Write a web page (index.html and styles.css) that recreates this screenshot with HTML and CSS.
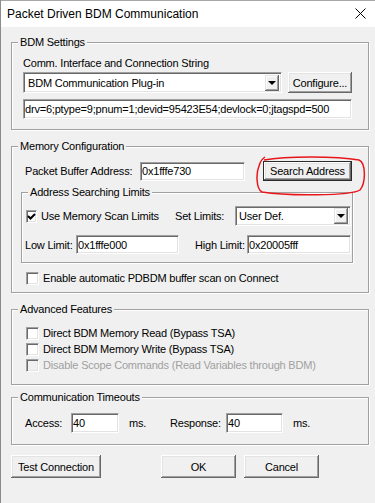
FILE: index.html
```html
<!DOCTYPE html>
<html lang="en">
<head>
    <meta charset="UTF-8">
    <title>Packet Driven BDM Communication</title>
    <link rel="stylesheet" href="styles.css">
</head>
<body>
    <div class="window">
        <div class="titlebar">
            <span class="title">Packet Driven BDM Communication</span>
            <svg class="close" width="11" height="11" viewBox="0 0 11 11">
                <path d="M0.5 0.5 L10.5 10.5 M10.5 0.5 L0.5 10.5" stroke="#000" stroke-width="1" fill="none"/>
            </svg>
        </div>

        <div class="client">
            <!-- BDM settings -->
            <fieldset class="group group-bdm">
                <legend>BDM Settings</legend>
                <div class="group-body">
                    <div class="caption">Comm. Interface and Connection String</div>
                    <div class="row row-combo">
                        <div class="combo combo-plugin">
                            <span class="combo-text">BDM Communication Plug-in</span>
                            <span class="drop"></span>
                        </div>
                        <button class="btn btn-configure">Configure...</button>
                    </div>
                    <input class="edit edit-conn" value="drv=6;ptype=9;pnum=1;devid=95423E54;devlock=0;jtagspd=500">
                </div>
            </fieldset>

            <!-- memory configuration -->
            <fieldset class="group group-mem">
                <legend>Memory Configuration</legend>
                <div class="group-body">
                    <div class="row row-buffer">
                        <span class="lbl lbl-buffer">Packet Buffer Address:</span>
                        <input class="edit edit-buffer" value="0x1fffe730">
                        <button class="btn btn-default btn-search">Search Address</button>
                    </div>

                    <fieldset class="group group-limits">
                        <legend>Address Searching Limits</legend>
                        <div class="group-body">
                            <div class="row row-scan">
                                <label class="check check-scan">
                                    <span class="box">
                                        <svg width="9" height="9" viewBox="0 0 9 9"><path d="M1 4 L3.5 6.5 L8 2" stroke="#000" stroke-width="2" fill="none"/></svg>
                                    </span>
                                    Use Memory Scan Limits
                                </label>
                                <span class="lbl lbl-set">Set Limits:</span>
                                <div class="combo combo-limits">
                                    <span class="combo-text">User Def.</span>
                                    <span class="drop"></span>
                                </div>
                            </div>
                            <div class="row row-limits">
                                <span class="lbl lbl-low">Low Limit:</span>
                                <input class="edit edit-low" value="0x1fffe000">
                                <span class="lbl lbl-high">High Limit:</span>
                                <input class="edit edit-high" value="0x20005fff">
                            </div>
                        </div>
                    </fieldset>

                    <label class="check check-auto">
                        <span class="box"></span>
                        Enable automatic PDBDM buffer scan on Connect
                    </label>
                </div>
                <svg class="mark" width="112" height="44" viewBox="0 0 112 44">
                    <path d="M8 5 C30 1, 80 1, 103 5 C110 8, 110 28, 104 35 C95 41, 30 41, 6 37 C0 34, 0 18, 3 11 C4 7, 6 4, 9 2" stroke="#e8161b" stroke-width="1.5" fill="none"/>
                </svg>
            </fieldset>

            <!-- advanced -->
            <fieldset class="group group-adv">
                <legend>Advanced Features</legend>
                <div class="group-body">
                    <label class="check"><span class="box"></span>Direct BDM Memory Read (Bypass TSA)</label>
                    <label class="check"><span class="box"></span>Direct BDM Memory Write (Bypass TSA)</label>
                    <label class="check disabled"><span class="box"></span>Disable Scope Commands (Read Variables through BDM)</label>
                </div>
            </fieldset>

            <!-- timeouts -->
            <fieldset class="group group-time">
                <legend>Communication Timeouts</legend>
                <div class="group-body">
                    <div class="row row-time">
                        <span class="lbl lbl-access">Access:</span>
                        <input class="edit edit-access" value="40">
                        <span class="lbl lbl-ms">ms.</span>
                        <span class="lbl lbl-resp">Response:</span>
                        <input class="edit edit-resp" value="40">
                        <span class="lbl lbl-ms">ms.</span>
                    </div>
                </div>
            </fieldset>

            <div class="buttons">
                <button class="btn btn-test">Test Connection</button>
                <button class="btn btn-ok">OK</button>
                <button class="btn btn-cancel">Cancel</button>
            </div>
        </div>
    </div>
</body>
</html>
```

FILE: styles.css
```css
body {
    margin: 0;
    padding: 0;
    overflow: hidden;
    background: #f0f0f0;
    font-family: "Liberation Sans", Arial, sans-serif;
    font-size: 11px;
    letter-spacing: -0.2px;
    color: #000;
}

.window {
    height: 503px;
    border-left: 1px solid #8c8c8c;
}

/* title bar */
.titlebar {
    box-sizing: border-box;
    height: 27px;
    background: #fff;
    border-top: 1px solid #a8a8a8;
    display: flex;
    align-items: center;
    padding: 0 9px 0 6px;
}

.title {
    font-size: 12px;
    letter-spacing: 0;
    flex: 1;
    padding-bottom: 1px;
}

.close {
    margin-top: -2px;
}

.client {
    padding: 8px 0 0 10px;
}

/* group boxes */
.group {
    position: relative;
    box-sizing: border-box;
    margin: 0;
    padding: 0;
    min-width: 0;
    border: 1px solid #a0a0a0;
    box-shadow: inset 1px 1px #fff, 1px 1px #fff;
}

.group legend {
    margin-left: 6px;
    padding: 0 2px;
    line-height: 14px;
    background: #f0f0f0;
}

.group-bdm {
    width: 358px;
}

.group-bdm .group-body {
    padding: 7px 0 10px 11px;
}

.group-mem {
    width: 358px;
    margin-top: 9px;
}

.group-mem > .group-body {
    padding: 8px 0 6px 9px;
}

.group-limits {
    width: 332px;
    margin-top: 4px;
}

.group-limits .group-body {
    padding: 7px 0 8px 4px;
}

.group-adv {
    width: 358px;
    margin-top: 9px;
}

.group-adv .group-body {
    padding: 9px 0 11px 14px;
}

.group-time {
    width: 358px;
    margin-top: 5px;
}

.group-time .group-body {
    padding: 9px 0 11px 13px;
}

/* rows */
.caption {
    line-height: 14px;
}

.row {
    display: flex;
    align-items: center;
}

.row-combo {
    margin-top: 2px;
}

.row-buffer {
    padding-left: 4px;
}

.row-limits {
    margin-top: 9px;
}

.lbl {
    white-space: nowrap;
}

.lbl-buffer { width: 115px; }
.lbl-set { width: 60px; margin-left: 18px; }
.lbl-low { width: 51px; margin-left: -1px; }
.lbl-high { width: 52px; margin-left: 16px; }
.lbl-access { width: 46px; }
.lbl-ms { width: 41px; margin-left: 10px; }
.lbl-resp { width: 56px; }

/* edit fields */
.edit {
    box-sizing: border-box;
    height: 20px;
    margin: 0;
    padding: 0 0 0 1px;
    border: 1px solid;
    border-color: #a0a0a0 #fff #fff #a0a0a0;
    box-shadow: inset 1px 1px #696969, inset -1px -1px #e3e3e3;
    background: #fff;
    font-family: "Liberation Sans", Arial, sans-serif;
    font-size: 11px;
    letter-spacing: -0.2px;
    color: #000;
    outline: none;
}

.edit-conn { width: 329px; margin-top: 6px; display: block; }
.edit-buffer { width: 105px; height: 19px; }
.edit-low { width: 103px; height: 19px; }
.edit-high { width: 104px; height: 19px; }
.edit-access { width: 48px; }
.edit-resp { width: 57px; }

/* combo boxes */
.combo {
    box-sizing: border-box;
    height: 21px;
    display: flex;
    align-items: center;
    border: 1px solid;
    border-color: #a0a0a0 #fff #fff #a0a0a0;
    box-shadow: inset 1px 1px #696969, inset -1px -1px #e3e3e3;
    background: #fff;
    padding: 0 2px 0 4px;
}

.combo-plugin { width: 259px; }
.combo-limits { width: 116px; height: 20px; padding-left: 3px; }

.combo-text {
    flex: 1;
}

.drop {
    position: relative;
    box-sizing: border-box;
    width: 14px;
    height: 16px;
    background: #f0f0f0;
    box-shadow: inset -1px -1px #696969, inset 1px 1px #e3e3e3, inset -2px -2px #a0a0a0, inset 2px 2px #fff;
}

.drop::after {
    content: "";
    position: absolute;
    left: 3px;
    top: 6px;
    border-left: 4px solid transparent;
    border-right: 4px solid transparent;
    border-top: 4px solid #000;
}

/* buttons */
.btn {
    box-sizing: border-box;
    margin: 0;
    padding: 0;
    border: none;
    background: #f0f0f0;
    font-family: "Liberation Sans", Arial, sans-serif;
    font-size: 11px;
    letter-spacing: -0.2px;
    color: #000;
    box-shadow: inset -1px -1px #696969, inset 1px 1px #fff, inset -2px -2px #a0a0a0, inset 2px 2px #e3e3e3;
}

.btn-default {
    border: 1px solid #2b2b2b;
}

.btn-configure { width: 64px; height: 21px; margin-left: 6px; }
.btn-search { width: 89px; height: 20px; margin-left: 18px; }

.buttons {
    display: flex;
    margin-top: 10px;
}

.buttons .btn {
    height: 23px;
}

.btn-test { width: 90px; }
.btn-ok { width: 75px; margin-left: 60px; }
.btn-cancel { width: 75px; margin-left: 8px; }

/* check boxes */
.check {
    display: flex;
    align-items: center;
    height: 16px;
    white-space: nowrap;
}

.box {
    box-sizing: border-box;
    width: 13px;
    height: 13px;
    margin-right: 4px;
    display: flex;
    align-items: center;
    justify-content: center;
    border: 1px solid;
    border-color: #a0a0a0 #fff #fff #a0a0a0;
    box-shadow: inset 1px 1px #696969, inset -1px -1px #e3e3e3;
    background: #fff;
}

.check-scan {
    width: 131px;
}

.check-auto {
    margin-top: 7px;
    padding-left: 5px;
}

.check.disabled {
    color: #a0a0a0;
}

.check.disabled .box {
    background: #f0f0f0;
}

/* red marker drawn over the search button */
.mark {
    position: absolute;
    left: 244px;
    top: 2px;
}
```
